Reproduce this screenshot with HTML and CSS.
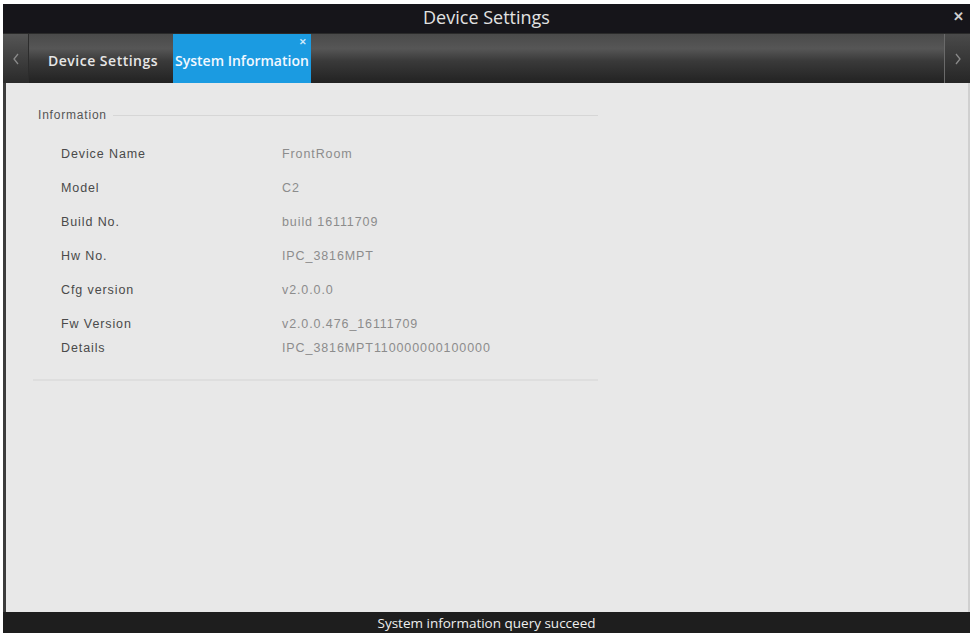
FILE: index.html
```html
<!DOCTYPE html>
<html lang="en">
<head>
  <meta charset="UTF-8">
  <title>Device Settings</title>
  <link rel="stylesheet" href="styles.css">
</head>
<body>
  <div class="window">
    <!-- Barra de titulo -->
    <div class="title-bar">
      <span class="title">Device Settings</span>
      <span class="close">&#x2715;</span>
    </div>

    <!-- Pestañas -->
    <div class="tab-bar">
      <div class="nav-btn nav-left">
        <svg width="8" height="14" viewBox="0 0 8 14"><path d="M6 2 L2 7 L6 12" fill="none" stroke="#8a8a8a" stroke-width="1.3"/></svg>
      </div>
      <div class="tab">Device Settings</div>
      <div class="tab active">System Information<span class="tab-close">&#x2715;</span></div>
      <div class="tab-fill"></div>
      <div class="nav-btn nav-right">
        <svg width="8" height="14" viewBox="0 0 8 14"><path d="M2 2 L6 7 L2 12" fill="none" stroke="#8a8a8a" stroke-width="1.3"/></svg>
      </div>
    </div>

    <!-- Contenido -->
    <div class="content">
      <div class="group">
        <div class="group-head">
          <span class="group-title">Information</span>
          <span class="group-line"></span>
        </div>
        <div class="rows">
          <div class="row"><span class="label">Device Name</span><span class="value">FrontRoom</span></div>
          <div class="row"><span class="label">Model</span><span class="value">C2</span></div>
          <div class="row"><span class="label">Build No.</span><span class="value">build 16111709</span></div>
          <div class="row"><span class="label">Hw No.</span><span class="value">IPC_3816MPT</span></div>
          <div class="row"><span class="label">Cfg version</span><span class="value">v2.0.0.0</span></div>
          <div class="row tight"><span class="label">Fw Version</span><span class="value">v2.0.0.476_16111709</span></div>
          <div class="row tight"><span class="label">Details</span><span class="value">IPC_3816MPT110000000100000</span></div>
        </div>
        <div class="group-bottom"></div>
      </div>
    </div>

    <!-- Barra de estado -->
    <div class="status-bar">System information query succeed</div>
  </div>
</body>
</html>
```

FILE: styles.css
```css
/* Estilos generales */
body {
  margin: 0;
  background-color: #ffffff;
  font-family: "Liberation Sans", Arial, sans-serif;
}

.window {
  margin: 4px 3px 4px 3px;
  height: 629px;
  display: flex;
  flex-direction: column;
  background-color: #e8e8e8;
}

/* Barra de titulo */
.title-bar {
  height: 29px;
  background-color: #16151a;
  position: relative;
  display: flex;
  align-items: center;
  justify-content: center;
}

.title {
  font-family: "Open Sans", sans-serif;
  font-size: 18px;
  color: #e2e2e2;
  margin-top: -3px;
}

.close {
  position: absolute;
  right: 6px;
  top: 5px;
  color: #cfcfcf;
  font-size: 13px;
  font-weight: bold;
}

/* Pestañas */
.tab-bar {
  height: 50px;
  display: flex;
  background: linear-gradient(#4a4a4a 0%, #565656 30%, #3a3a3a 55%, #222222 100%);
  border-top: 1px solid #2a2a2a;
  box-sizing: border-box;
}

.nav-btn {
  width: 25px;
  display: flex;
  align-items: center;
  justify-content: center;
  background: linear-gradient(#555555, #2a2a2a);
}

.nav-left {
  border-right: 1px solid #2c2c2c;
}

.nav-right {
  border-left: 1px solid #6a6a6a;
  background: linear-gradient(#4a4a4a, #262626);
}

.tab {
  font-family: "Open Sans", sans-serif;
  font-weight: 600;
  font-size: 14px;
  letter-spacing: 0.5px;
  color: #e6e6e6;
  padding: 3px 15px 0 19px;
  display: flex;
  align-items: center;
}

.tab.active {
  background-color: #1b9be1;
  color: #f2f8ff;
  letter-spacing: 0;
  padding: 3px 2px 0 2px;
  position: relative;
}

.tab-close {
  position: absolute;
  right: 4px;
  top: 1px;
  font-size: 9px;
  color: #cde9fb;
}

.tab-fill {
  flex: 1;
}

/* Contenido */
.content {
  flex: 1;
  border-left: 3px solid #3c3c3c;
  border-right: 2px solid #d0d0d0;
  padding: 25px 0 0 27px;
}

.group {
  width: 565px;
}

.group-head {
  display: flex;
  align-items: center;
  gap: 6px;
  margin-left: 5px;
}

.group-title {
  font-size: 12px;
  letter-spacing: 0.8px;
  color: #555555;
}

.group-line {
  flex: 1;
  border-top: 1px solid #d6d6d6;
}

.rows {
  padding: 25px 0 0 28px;
}

.row {
  display: flex;
  height: 34px;
  align-items: flex-start;
  font-size: 12.5px;
  letter-spacing: 0.9px;
}

.row.tight {
  height: 24px;
}

.label {
  width: 221px;
  color: #4a4a4a;
}

.value {
  color: #8c8c8c;
}

.group-bottom {
  margin-top: 14px;
  border-top: 2px solid #dedede;
}

/* Barra de estado */
.status-bar {
  height: 21px;
  background-color: #1e1e1e;
  color: #eeeeee;
  font-family: "Open Sans", sans-serif;
  font-size: 13.5px;
  display: flex;
  align-items: center;
  justify-content: center;
}
```
